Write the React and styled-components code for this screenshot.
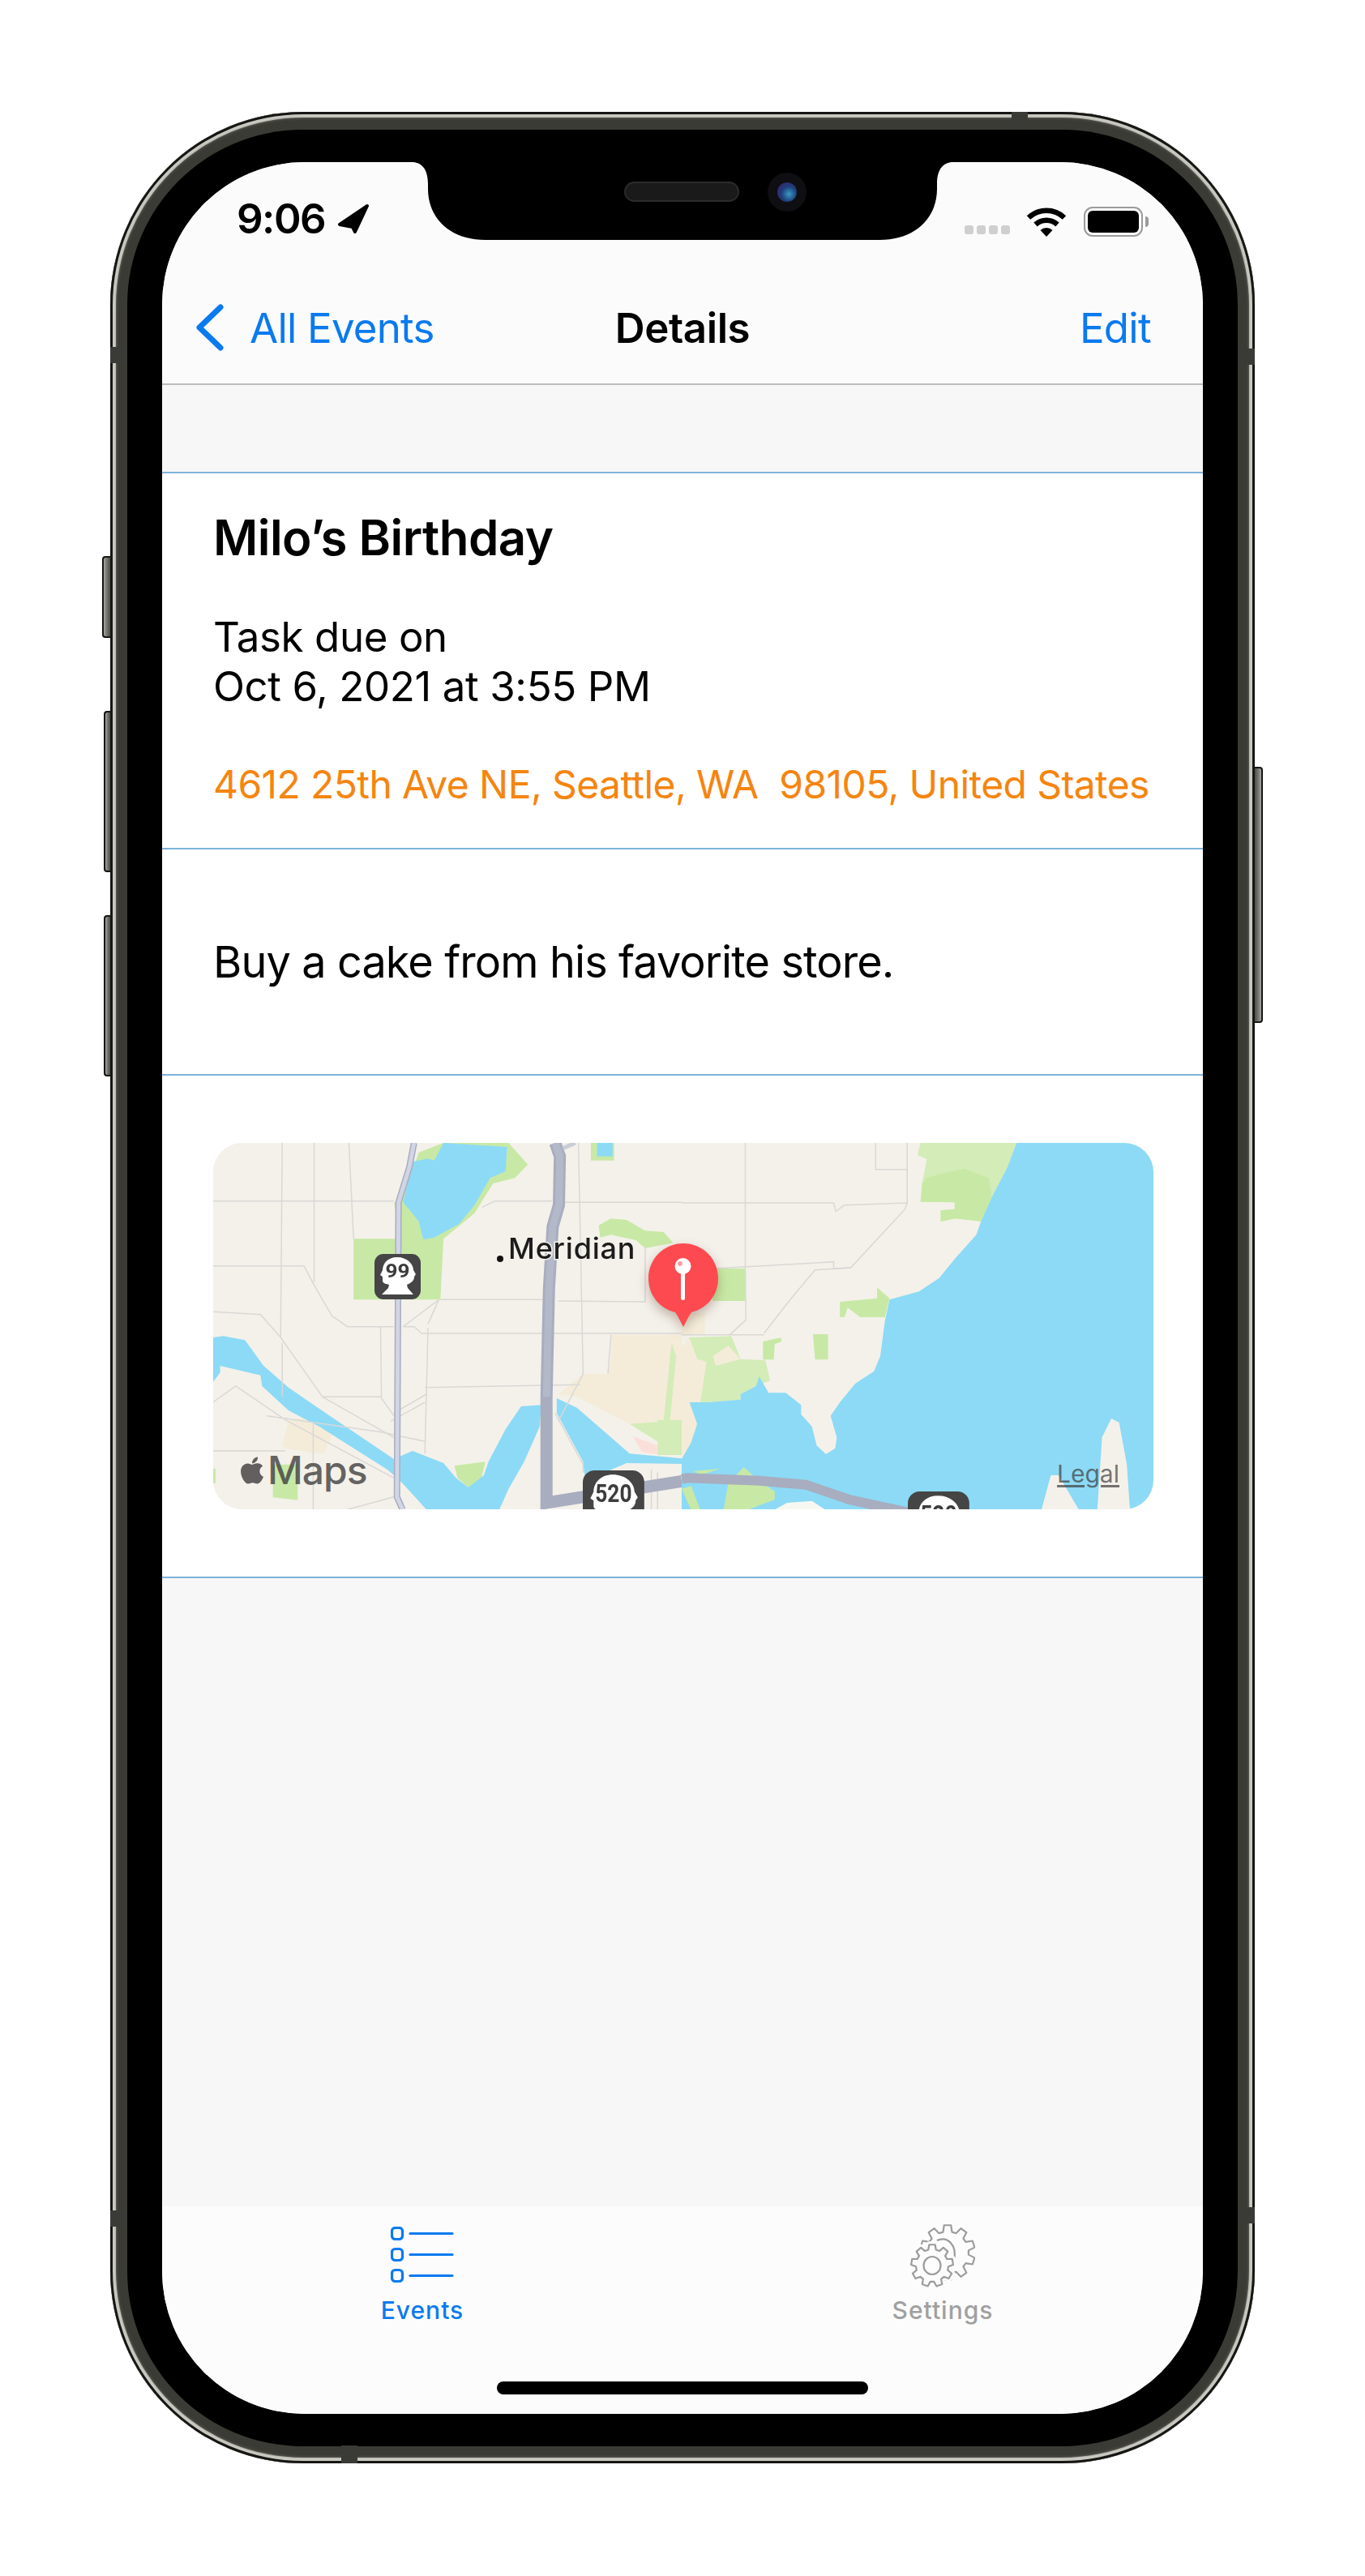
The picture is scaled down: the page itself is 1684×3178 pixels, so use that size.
import styled, { createGlobalStyle } from 'styled-components';
import { FaApple } from 'react-icons/fa';

const GlobalStyle = createGlobalStyle`
    html, body {
        margin: 0;
        padding: 0;
        background: #ffffff;
        font-family: Inter, "Liberation Sans", sans-serif;
    }
`;

const Page = styled.div`
    width: 1684px;
    height: 3178px;
    padding: 138px 0 0 136px;
    box-sizing: border-box;
    overflow: hidden;
`;

const Frame = styled.div`
    position: relative;
    width: 1412px;
    height: 2901px;
    box-sizing: border-box;
    padding: 22px 21px 21px;
    border-radius: 238px;
    background: #3b3b35;
    box-shadow:
        inset 0 0 0 3px #161614,
        inset 0 0 1px 7px #c8c8c0,
        inset 0 0 3px 9px #4a4a44;
`;

const Band = styled.div`
    position: absolute;
    background: #3a3a36;
    ${p => p.$horizontal
        ? `left: ${p.$left}px; width: 20px; height: 22px; ${p.$bottom ? 'bottom: 0;' : 'top: 0;'}`
        : `top: ${p.$top}px; width: 21px; height: 20px; ${p.$right ? 'right: 0;' : 'left: 0;'}`}
`;

const SideButton = styled.div`
    position: absolute;
    top: ${p => p.$top}px;
    height: ${p => p.$height}px;
    width: ${p => p.$width}px;
    ${p => p.$right ? 'right' : 'left'}: -${p => p.$width}px;
    box-sizing: border-box;
    background: linear-gradient(${p => p.$right ? '270deg' : '90deg'}, #a8a8a2 0, #777772 45%, #4c4c48 100%);
    border: 2px solid #161614;
    border-${p => p.$right ? 'left' : 'right'}: none;
    border-radius: ${p => p.$right ? '0 4px 4px 0' : '4px 0 0 4px'};
`;

const Bezel = styled.div`
    height: 100%;
    box-sizing: border-box;
    padding: 40px 43px;
    background: #000000;
    border-radius: 216px;
`;

const Screen = styled.div`
    position: relative;
    display: flex;
    flex-direction: column;
    height: 100%;
    overflow: hidden;
    border-radius: 176px;
    background: #f7f7f7;
    color: #000000;
`;

const Notch = styled.svg`
    position: absolute;
    top: 0;
    left: 308px;
`;

const Header = styled.header`
    height: 275px;
    box-sizing: border-box;
    padding-top: 48px;
    background: #fbfbfb;
    border-bottom: 2px solid #bcbcbc;
`;

const StatusBar = styled.div`
    display: flex;
    align-items: flex-start;
    justify-content: space-between;
    height: 44px;
    padding: 0 74px 0 92px;
`;

const StatusLeft = styled.div`
    display: flex;
    align-items: center;
    gap: 15px;
`;

const Time = styled.span`
    font-size: 51px;
    font-weight: 600;
    line-height: 44px;
    letter-spacing: -1.5px;
`;

const StatusRight = styled.div`
    display: flex;
    align-items: flex-end;
    height: 40px;
    padding-top: 4px;
`;

const SignalDots = styled.div`
    display: flex;
    gap: 4px;
    margin-right: 20px;
    margin-bottom: 3px;
`;

const SignalDot = styled.span`
    width: 11px;
    height: 11px;
    border-radius: 3px;
    background: #cfcfcf;
`;

const Battery = styled.div`
    position: relative;
    box-sizing: border-box;
    width: 73px;
    height: 37px;
    margin-left: 21px;
    padding: 3px;
    border: 2.5px solid #9b9b9b;
    border-radius: 11px;

    &::after {
        content: '';
        position: absolute;
        right: -9px;
        top: 10px;
        width: 4px;
        height: 13px;
        border-radius: 0 4px 4px 0;
        background: #9b9b9b;
    }
`;

const BatteryLevel = styled.div`
    height: 100%;
    border-radius: 6px;
    background: #000000;
`;

const NavBar = styled.div`
    position: relative;
    display: flex;
    align-items: center;
    justify-content: space-between;
    height: 136px;
    padding: 88px 64px 0 42px;
    box-sizing: border-box;
    font-size: 51px;
`;

const BackLink = styled.span`
    display: flex;
    align-items: center;
    gap: 32px;
    color: #0a7aef;
    letter-spacing: -0.8px;
`;

const NavTitle = styled.span`
    position: absolute;
    left: 0;
    right: 0;
    top: 88px;
    bottom: 0;
    display: flex;
    align-items: center;
    justify-content: center;
    font-weight: 600;
    letter-spacing: -0.4px;
`;

const EditLink = styled.span`
    color: #0a7aef;
    letter-spacing: -0.7px;
`;

const Spacer = styled.div`
    height: 107px;
`;

const Section = styled.section`
    box-sizing: border-box;
    background: #ffffff;
    border-bottom: 2px solid #7db3da;
    padding-left: 63px;
    padding-right: 62px;
    ${p => p.$first && 'border-top: 2px solid #7db3da;'}
`;

const InfoSection = styled(Section)`
    height: 466px;
    padding-top: 39px;
`;

const EventTitle = styled.h1`
    margin: 0;
    font-size: 60px;
    font-weight: 600;
    line-height: 80px;
    letter-spacing: -0.55px;
`;

const DueText = styled.p`
    margin: 52px 0 0;
    font-size: 51px;
    line-height: 61px;
    letter-spacing: -0.4px;
`;

const Address = styled.p`
    margin: 60px 0 0;
    font-size: 48px;
    line-height: 61px;
    letter-spacing: -0.6px;
    color: #f5850f;
    white-space: pre;
`;

const NoteSection = styled(Section)`
    display: flex;
    align-items: center;
    height: 279px;
    font-size: 54px;
    letter-spacing: -0.9px;
`;

const MapSection = styled(Section)`
    padding-top: 83px;
    padding-bottom: 83px;
    height: 620px;
`;

const MapCard = styled.div`
    position: relative;
    width: 1160px;
    height: 452px;
    overflow: hidden;
    border-radius: 36px;
    background: #f4f1ea;
`;

const MapDrawing = styled.svg`
    display: block;
    filter: blur(0.4px);

    .road, .thin, .bg {
        vector-effect: non-scaling-stroke;
    }
`;

const MapBrand = styled.div`
    position: absolute;
    left: 29px;
    top: 376px;
    display: flex;
    align-items: center;
    gap: 0;
    color: rgba(60, 60, 60, 0.8);
    font-size: 48px;
    font-weight: 500;
    line-height: 56px;
    letter-spacing: -1px;
`;

const LegalLink = styled.span`
    position: absolute;
    left: 1041px;
    top: 391px;
    font-size: 30px;
    line-height: 34px;
    color: rgba(60, 60, 60, 0.7);
    text-decoration: underline;
    text-underline-offset: 3px;
`;

const Fill = styled.div`
    flex: 1;
`;

const TabBar = styled.nav`
    display: flex;
    height: 256px;
    background: #fcfcfc;
`;

const Tab = styled.div`
    flex: 1;
    display: flex;
    flex-direction: column;
    align-items: center;
    padding-top: 18px;
    color: ${p => p.$active ? '#0a7aef' : '#a0a0a0'};
`;

const TabIcon = styled.div`
    display: flex;
    align-items: center;
    justify-content: center;
    height: 84px;
`;

const TabLabel = styled.span`
    margin-top: 8px;
    font-size: 30px;
    font-weight: 500;
    line-height: 36px;
    letter-spacing: 1px;
`;

const HomeIndicator = styled.div`
    position: absolute;
    left: 413px;
    bottom: 24px;
    width: 458px;
    height: 16px;
    border-radius: 8px;
    background: #000000;
`;

const gearPath = (cx, cy, rOut, rIn, teeth) => {
    const step = (Math.PI * 2) / teeth;
    const pts = [];
    for (let i = 0; i < teeth; i++) {
        const a = i * step - Math.PI / 2;
        [[-0.34, rIn], [-0.2, rOut], [0.2, rOut], [0.34, rIn]].forEach(([off, r]) => {
            const t = a + off * step;
            pts.push(`${(cx + Math.cos(t) * r).toFixed(2)} ${(cy + Math.sin(t) * r).toFixed(2)}`);
        });
    }
    return `M${pts.join('L')}Z`;
};

const LocationArrow = () => (
    <svg width="40" height="38" viewBox="0 0 40 38">
        <path d="M37 3 L3 26 L19 29 L22 35 Z" fill="#000" stroke="#000" strokeWidth="4" strokeLinejoin="round" />
    </svg>
);

const Wifi = () => (
    <svg width="50" height="37" viewBox="0 0 50 37" fill="none" stroke="#000">
        <path d="M3 13.5 A32 32 0 0 1 47 13.5" strokeWidth="6.5" />
        <path d="M11.5 22 A20 20 0 0 1 38.5 22" strokeWidth="6.5" />
        <path d="M17.5 29 A11 11 0 0 1 32.5 29 L25 37 Z" fill="#000" stroke="none" />
    </svg>
);

const EventsIcon = () => (
    <svg width="78" height="70" viewBox="0 0 78 70" fill="none" stroke="#0a7aef">
        {[0, 26, 52].map(y => (
            <g key={y}>
                <rect x="1.5" y={y + 1.5} width="13" height="14" rx="4" strokeWidth="3.2" />
                <path d={`M24 ${y + 8.5} H76`} strokeWidth="3.2" strokeLinecap="round" />
            </g>
        ))}
    </svg>
);

const SettingsIcon = () => (
    <svg width="80" height="80" viewBox="0 0 80 80" fill="none" stroke="#9c9c9c" strokeWidth="2.2" strokeLinejoin="round">
        <path d={gearPath(46, 37, 34, 26, 10)} />
        <path d="M33 22 C46 16 58 28 54 46" />
        <path d={gearPath(27, 53, 26, 20, 9)} fill="#fcfcfc" stroke="#fcfcfc" strokeWidth="8" />
        <path d={gearPath(27, 53, 26, 20, 9)} fill="#fcfcfc" />
        <ellipse cx="27" cy="53" rx="10.5" ry="11" />
    </svg>
);

const HEAD = 'M28 4 C16 4 10 12 10 20 L7 26 L10 28 L10 33 C10 37 16 37 18 38 L17 42 L9 50 H48 L41 42 L40 38 C44 36 49 34 49 28 L51 25 L48 20 C48 12 40 4 28 4 Z';

const Shield = ({ x, y, scale, label, width }) => (
    <g transform={`translate(${x} ${y}) scale(${scale})`}>
        <rect width="57" height="56" rx="11" fill="#454545" />
        <path d={HEAD} fill="#ffffff" />
        <text
            x="28.5"
            y="29"
            textAnchor="middle"
            textLength={width}
            lengthAdjust="spacingAndGlyphs"
            fontFamily="Roboto, sans-serif"
            fontWeight="700"
            fontSize="23"
            fill="#3c3c3c"
        >
            {label}
        </text>
    </g>
);

const WaterColor = '#8cdaf6';
const GreenColor = '#c8e9a6';
const PaleGreen = '#d3ecb8';
const TanColor = '#f4ecd9';

const MapArt = () => (
    <MapDrawing width="1160" height="452" viewBox="0 0 1160 452">
        <rect width="1160" height="452" fill="#f4f1ea" />

        {/* west half */}
        <g transform="translate(-22 -20) scale(0.38270 0.33333)">
            <path fill={TanColor} d="M1340 770 H1568 V1110 L1490 1165 L1400 1100 L1230 1000 L1170 990 L1250 915 H1330 L1340 860 Z" />
            <path fill={TanColor} d="M300 1090 L355 1075 L445 1130 L415 1210 L370 1205 L290 1190 L280 1180 Z" />
            <path fill="#fbe0da" d="M1410 1145 L1490 1180 V1212 L1440 1205 Z" />
            <path fill={PaleGreen} d="M1490 1085 H1568 V1215 H1490 Z" />
            <path fill={PaleGreen} d="M1400 1100 L1490 1165 L1510 1085 L1535 800 L1550 850 L1530 1090 Z" />
            <path fill={GreenColor} d="M250 1250 H330 V1382 L250 1372 Z" />
            <path fill={GreenColor} d="M57 1265 H65 V1320 H57 Z" />
            <path fill={GreenColor} d="M510 415 H660 L640 280 L660 290 L720 95 L800 60 H1010 L1072 140 L1030 190 L960 210 L900 320 L800 415 L790 640 H510 Z" />
            <path fill={GreenColor} d="M1300 365 L1340 340 L1390 345 L1450 385 L1510 390 L1540 430 L1450 450 L1420 420 L1340 400 L1305 410 Z" />
            <path fill={GreenColor} d="M1275 60 H1350 V125 L1275 125 Z" />
            <path fill={GreenColor} d="M835 1255 L935 1240 L920 1310 L880 1335 L845 1300 Z" />

            <path fill={WaterColor} d="M1295 60 H1345 V110 H1295 Z" />
            <path fill={WaterColor} d="M800 60 L1005 75 L1000 165 L950 190 L900 290 L850 360 L770 410 L735 418 L720 350 L670 280 L700 130 L750 118 L770 125 Z" />
            <path fill={WaterColor} d="M57 780 L90 775 L160 790 L220 885 L300 965 L420 1060 L640 1230 L700 1200 L800 1245 L840 1300 L880 1335 L930 1290 L945 1240 L1000 1120 L1050 1035 L1115 1030 L1110 1110 L1060 1240 L1010 1340 L980 1417 H745 L660 1310 L620 1270 L400 1110 L300 1050 L215 960 L210 920 L80 885 L80 910 L57 945 Z" />
            <path fill={WaterColor} d="M1165 1005 L1230 1040 L1300 1110 L1400 1210 L1568 1228 V1248 L1390 1245 L1300 1290 L1255 1290 L1250 1240 L1165 1060 Z" />

            <g fill="none" stroke="#d9d8d6" strokeWidth="1.5">
                <path className="thin" d="M57 275 H640 M925 298 L965 275 H1150 M1190 280 H1568" />
                <path className="thin" d="M57 515 H350 L380 580 L440 700 L490 740 H640 M670 740 H705 L730 765 H1568" />
                <path className="thin" d="M280 60 L275 780 M383 60 V575 M495 60 L510 415 M280 800 V1000" />
                <path className="thin" d="M790 640 H1140 M1170 645 L1450 648 M1450 440 V650" />
                <path className="thin" d="M57 685 L210 695 L275 780 L410 1000 H600 M597 742 L600 1005 L640 1070" />
                <path className="thin" d="M750 745 L740 1210 M785 640 L670 740 M785 640 L750 730 M740 965 L1240 955" />
                <path className="thin" d="M1235 60 L1250 915 L1170 1090 M1340 770 L1330 915" />
                <path className="thin" d="M57 1020 L130 960 L290 1085 L640 1300 M230 1070 L600 1130 L740 1165 M410 1000 L640 1150" />
                <path className="thin" d="M640 1060 L745 990 M630 1090 L740 1020 M380 1100 V1417 M57 1200 H290 M1160 1060 L1250 1250 V1280" />
                <path className="thin" d="M1490 1417 V1280 M1470 1270 V1417 M490 1417 L640 1370" />
            </g>

            <path className="road" fill="none" stroke="#a8adbf" strokeWidth="8" d="M705 60 L690 150 L655 280 L650 1370 L668 1417" />
            <path className="road" fill="none" stroke="#d1d5e4" strokeWidth="5" d="M705 60 L690 150 L655 280 L650 1370 L668 1417" />
            <path className="road" fill="none" stroke="#a8adbf" strokeWidth="15" d="M1160 60 L1175 110 L1172 290 L1152 370 L1140 600 L1132 1000 L1132 1392 L1568 1312" />
            <path className="road" fill="none" stroke="#b4b9c9" strokeWidth="9" d="M1160 60 L1175 110 L1172 290 L1152 370 L1140 600 L1132 1000" />
            <path className="road" fill="none" stroke="#c9cdd8" strokeWidth="5" d="M1185 80 L1225 60" />
        </g>

        {/* east half */}
        <g transform="translate(578 -20) scale(0.38270 0.33333)">
            <path fill={TanColor} d="M0 770 H75 V690 H0 Z" />
            <path fill={GreenColor} d="M105 525 H205 V645 H100 Z" />
            <path fill={PaleGreen} d="M770 60 H1080 L1050 150 L1000 260 L965 350 L880 340 L835 352 V310 L880 305 V280 L770 278 L775 210 L790 120 L760 105 Z" />
            <path fill={GreenColor} d="M790 190 L850 170 L910 155 L990 190 L1000 260 L965 350 L880 340 L835 352 V310 L880 305 V280 L770 278 L775 210 Z" />
            <path fill={GreenColor} d="M510 648 L630 635 V595 L670 635 L655 705 H575 L535 670 L525 705 H510 Z" />
            <path fill={GreenColor} d="M423 768 H472 V862 H430 Z" />
            <path fill={GreenColor} d="M262 795 L320 780 L322 795 L300 805 L297 862 H262 Z" />
            <path fill={PaleGreen} d="M25 780 L160 775 L190 860 L270 865 L285 940 L240 960 L190 990 V1010 L85 1020 L30 1020 L50 1100 L30 1170 L0 1230 V820 Z" />
            <path fill={TanColor} d="M0 820 L25 780 L50 860 L80 870 L60 1020 L30 1020 L50 1100 L30 1170 L0 1230 Z" />
            <path fill={TanColor} d="M100 850 L150 810 L190 860 L110 885 Z" />

            <path fill={WaterColor} d="M1080 60 H1568 V1417 H0 V1230 L30 1170 L50 1100 L25 1020 L85 1020 L190 1010 V990 L240 960 L250 925 L280 985 L335 985 L385 1030 L385 1065 L420 1110 L435 1180 L465 1212 L495 1190 L500 1150 L480 1070 L510 1020 L560 950 L620 905 L640 850 L655 720 L670 640 L765 610 L830 560 L880 490 L950 400 L965 350 L1000 260 L1050 150 Z" />
            <path fill="#f4f1ea" d="M1385 1080 L1410 1095 L1435 1250 L1445 1417 H1340 L1355 1150 Z" />
            <path fill="#f4f1ea" d="M1160 1417 L1190 1290 L1215 1290 L1280 1417 Z" />
            <path fill="#f8f8f2" d="M300 1417 L340 1392 L420 1385 L462 1417 Z" />
            <path fill={GreenColor} d="M135 1417 L150 1320 L200 1260 L250 1310 L300 1350 L300 1380 L215 1417 Z" />
            <path fill={GreenColor} d="M40 1275 L125 1265 L60 1290 Z" />
            <path fill={GreenColor} d="M0 1340 L30 1330 L60 1417 H30 Z" />

            <g fill="none" stroke="#d9d8d6" strokeWidth="1.5">
                <path className="thin" d="M205 60 V520 L207 715 L155 770 H0 M155 770 H265" />
                <path className="thin" d="M0 282 H490 L497 313 L525 290 L727 282 M727 60 V282 L720 305 L545 522 L430 530 L350 640 L265 765" />
                <path className="thin" d="M625 60 V158 H727 M105 525 L490 500 V525 L545 522" />
            </g>

            <path className="road" fill="none" stroke="#a8adbf" strokeWidth="12" d="M0 1304 L20 1300 L250 1310 L400 1325 L540 1380 L740 1430" />
        </g>

        <Shield x={199} y={137} scale={1} label="99" width={30} />
        <Shield x={456} y={404} scale={1.33} label="520" width={34} />
        <Shield x={857} y={430} scale={1.33} label="520" width={34} />

        <circle cx="354" cy="143" r="4" fill="#111" />
        <text
            x="364"
            y="143"
            fontFamily="Inter, sans-serif"
            fontWeight="500"
            fontSize="36"
            letterSpacing="0.8"
            fill="#1c1c1c"
            stroke="#f4f1ea"
            strokeWidth="3"
            paintOrder="stroke"
        >
            Meridian
        </text>

        {/* pin */}
        <g style={{ filter: 'drop-shadow(0 6px 7px rgba(90,60,40,0.35))' }}>
            <path
                d="M580 124 C556 124 537 143 537 167 C537 190 553 205 570 209 C574 214 577 222 580 227 C583 222 586 214 590 209 C607 205 623 190 623 167 C623 143 604 124 580 124 Z"
                fill="#fc4a50"
            />
        </g>
        <rect x="577" y="152" width="5" height="42" rx="2.5" fill="#ffffff" />
        <circle cx="579.5" cy="152" r="10" fill="#ffffff" />
        <circle cx="576" cy="149" r="3" fill="#fc4a50" opacity="0.55" />
    </MapDrawing>
);

const App = () => {
    return (
        <Page>
            <GlobalStyle />
            <Frame>
                <Band $horizontal $left={1112} />
                <Band $horizontal $left={285} $bottom />
                <Band $top={290} />
                <Band $top={292} $right />
                <Band $top={2589} />
                <Band $top={2585} $right />
                <SideButton $top={548} $height={101} $width={10} />
                <SideButton $top={739} $height={199} $width={8} />
                <SideButton $top={991} $height={199} $width={8} />
                <SideButton $top={808} $height={316} $width={10} $right />
                <Bezel>
                    <Screen>
                        <Header>
                            <StatusBar>
                                <StatusLeft>
                                    <Time>9:06</Time>
                                    <LocationArrow />
                                </StatusLeft>
                                <StatusRight>
                                    <SignalDots>
                                        <SignalDot />
                                        <SignalDot />
                                        <SignalDot />
                                        <SignalDot />
                                    </SignalDots>
                                    <Wifi />
                                    <Battery>
                                        <BatteryLevel />
                                    </Battery>
                                </StatusRight>
                            </StatusBar>
                            <NavBar>
                                <BackLink>
                                    <svg width="34" height="58" viewBox="0 0 34 58" fill="none" stroke="#0a7aef" strokeWidth="7" strokeLinecap="round" strokeLinejoin="round">
                                        <path d="M30 4 L4 29 L30 54" />
                                    </svg>
                                    All Events
                                </BackLink>
                                <NavTitle>Details</NavTitle>
                                <EditLink>Edit</EditLink>
                            </NavBar>
                        </Header>
                        <Spacer />
                        <InfoSection $first>
                            <EventTitle>Milo’s Birthday</EventTitle>
                            <DueText>
                                Task due on
                                <br />
                                Oct 6, 2021 at 3:55 PM
                            </DueText>
                            <Address>4612 25th Ave NE, Seattle, WA  98105, United States</Address>
                        </InfoSection>
                        <NoteSection>Buy a cake from his favorite store.</NoteSection>
                        <MapSection>
                            <MapCard>
                                <MapArt />
                                <MapBrand>
                                    <FaApple size={38} />
                                    Maps
                                </MapBrand>
                                <LegalLink>Legal</LegalLink>
                            </MapCard>
                        </MapSection>
                        <Fill />
                        <TabBar>
                            <Tab $active>
                                <TabIcon>
                                    <EventsIcon />
                                </TabIcon>
                                <TabLabel>Events</TabLabel>
                            </Tab>
                            <Tab>
                                <TabIcon>
                                    <SettingsIcon />
                                </TabIcon>
                                <TabLabel>Settings</TabLabel>
                            </Tab>
                        </TabBar>
                        <Notch width="668" height="96" viewBox="0 0 668 96">
                            <path d="M0 0 H668 C658 0 648 6 648 27 V33 C648 70 620 96 577 96 H91 C48 96 20 70 20 33 V27 C20 6 10 0 0 0 Z" fill="#000" />
                            <rect x="263" y="25" width="140" height="23" rx="11.5" fill="#1a1a1a" stroke="#2b2b2b" strokeWidth="2" />
                            <circle cx="463" cy="37" r="24" fill="#0e0e13" />
                            <defs>
                                <radialGradient id="lens" cx="0.6" cy="0.6" r="0.7">
                                    <stop offset="0" stopColor="#3b9ac4" />
                                    <stop offset="0.55" stopColor="#1d3f7a" />
                                    <stop offset="1" stopColor="#3a2170" />
                                </radialGradient>
                            </defs>
                            <circle cx="463" cy="37" r="12" fill="url(#lens)" />
                        </Notch>
                        <HomeIndicator />
                    </Screen>
                </Bezel>
            </Frame>
        </Page>
    );
};

export default App;
